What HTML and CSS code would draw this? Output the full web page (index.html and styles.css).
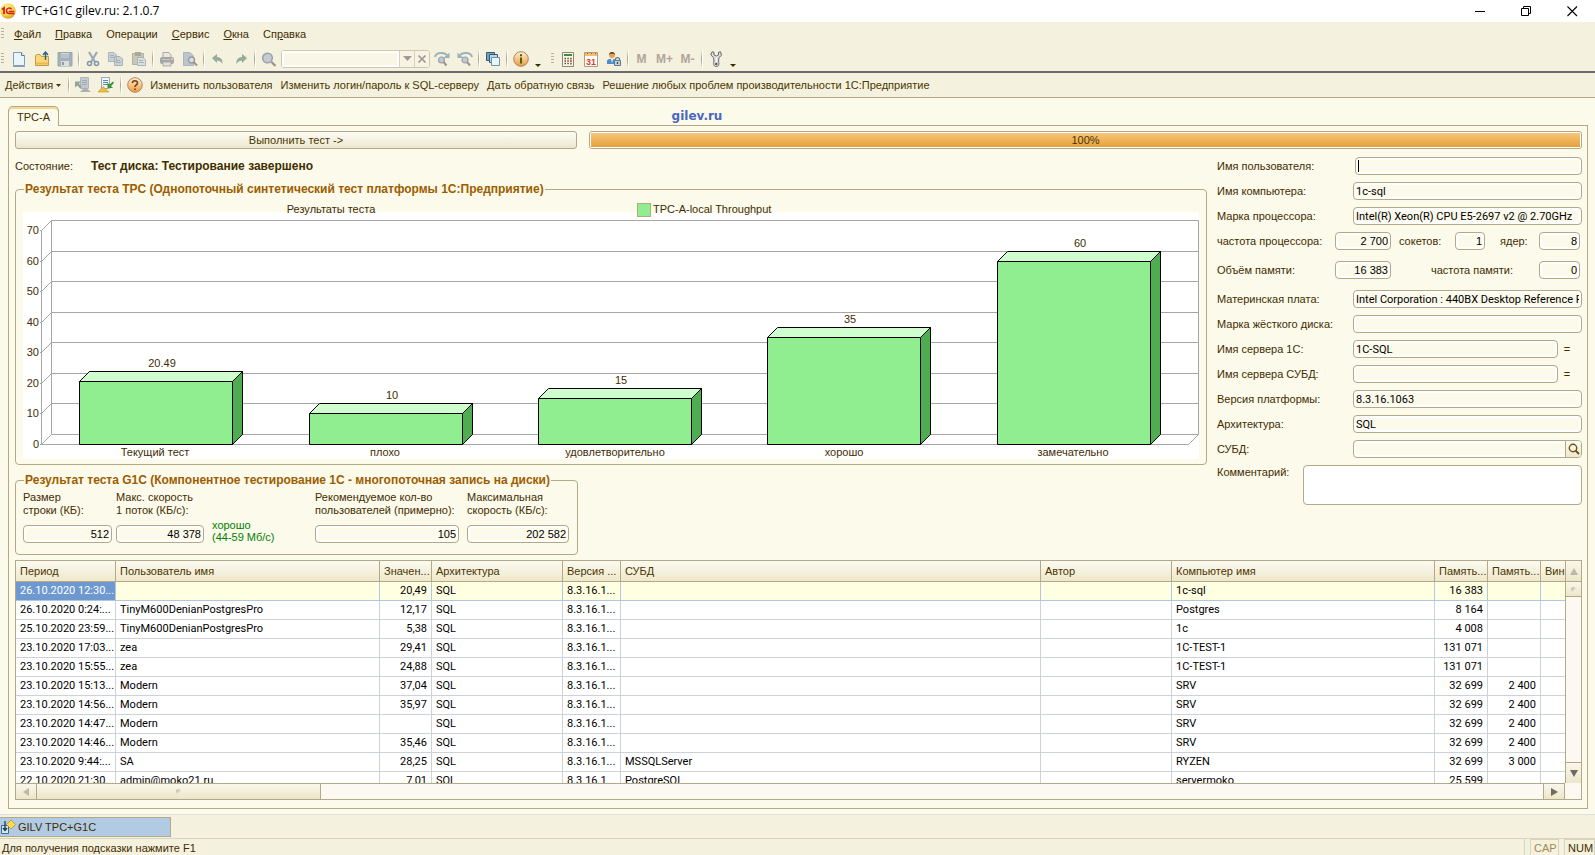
FILE: index.html
```
<!DOCTYPE html>
<html lang="ru">
<head>
<meta charset="utf-8">
<title>TPC+G1C gilev.ru: 2.1.0.7</title>
<link rel="stylesheet" href="styles.css">
</head>
<body>
<header class="titlebar">
  <svg class="logo" width="16" height="16" viewBox="0 0 16 16"><defs><radialGradient id="gold" cx=".4" cy=".3" r=".8"><stop offset="0" stop-color="#fff3a0"/><stop offset=".6" stop-color="#f6cf45"/><stop offset="1" stop-color="#c98d1c"/></radialGradient></defs><circle cx="8" cy="8" r="7.7" fill="url(#gold)"/><path d="M2 6.500L4 5V11" fill="none" stroke="#d9201a" stroke-width="1.800"/><path d="M11.500 6.300C10.500 4.300 6.500 4.700 6.500 7.700C6.500 10.300 8.500 10.500 9.500 10.500H14.500M8.800 8.500H14" fill="none" stroke="#d9201a" stroke-width="1.500"/></svg>
  <h1 class="title">TPC+G1C gilev.ru: 2.1.0.7</h1>
  <div class="winbtns">
    <button aria-label="Свернуть"><svg width="11" height="11"><path d="M0 5.500H10" stroke="#000"/></svg></button>
    <button aria-label="Развернуть"><svg width="11" height="11"><path d="M.5 2.500H7.500V9.500H.5ZM2.500 2.500V.5H9.500V7.500H7.500" fill="none" stroke="#000"/></svg></button>
    <button aria-label="Закрыть"><svg width="11" height="11"><path d="M.5 .5L10 10M10 .5L.5 10" stroke="#000" stroke-width="1.100"/></svg></button>
  </div>
</header>

<nav class="menubar">
  <span class="grip"></span>
  <button><u>Ф</u>айл</button><button><u>П</u>равка</button><button>Операции</button><button><u>С</u>ервис</button><button><u>О</u>кна</button><button>Сп<u>р</u>авка</button>
</nav>

<div class="toolbar">
  <span class="grip"></span>
  <button class="tb" aria-label="Создать"><svg width="16" height="16"><path d="M2.500 1.500H10.500L13.500 4.500V14.500H2.500Z" fill="#eaf4fb" stroke="#7d9dbd"/><path d="M10.500 1.500V4.500H13.500" fill="#fff" stroke="#4f7ba8"/><path d="M2 15.500H14" stroke="#8a9fb4"/></svg></button>
  <button class="tb" aria-label="Открыть"><svg width="16" height="16"><path d="M1.500 14.500V4.500L3 3.500H6L7.500 5.500H14.500V14.500Z" fill="#fbd877" stroke="#c89c45"/><path d="M2 12.500H14" stroke="#edb94e" stroke-width="2"/><path d="M11.500 9V1.500M9 4L11.500 1L14 4" fill="none" stroke="#2b6183" stroke-width="1.400"/></svg></button>
  <button class="tb" aria-label="Сохранить"><svg width="16" height="16"><path d="M1 1.500H15V15H1Z" fill="#a3b1bb" stroke="#98a6b0"/><path d="M4 2H12V7H4Z" fill="#cfd6d8"/><path d="M4 4H12M4 6H12" stroke="#a3b1bb"/><path d="M4 10H12V15H4Z" fill="#dbe0df"/><path d="M6 11V14" stroke="#8c9aa5" stroke-width="2"/></svg></button>
  <span class="sep"></span>
  <button class="tb" aria-label="Вырезать"><svg width="16" height="16"><path d="M4 1L10 11M12 1L6 11" stroke="#9aaab6" stroke-width="2.200"/><circle cx="4.500" cy="12.500" r="2" fill="none" stroke="#8297a9" stroke-width="1.600"/><circle cx="11.500" cy="12.500" r="2" fill="none" stroke="#8297a9" stroke-width="1.600"/></svg></button>
  <button class="tb" aria-label="Копировать"><svg width="16" height="16"><path d="M.5 1.500H6L8.500 4V10.500H.5ZM6.500 5.500H12L14.500 8V14.500H6.500Z" fill="#cbd2d3" stroke="#a8b3bd"/><path d="M2 4.500H6M2 6.500H6M8 9.500H12M8 11.500H13" stroke="#a2afba"/></svg></button>
  <button class="tb" aria-label="Вставить"><svg width="16" height="16"><path d="M1.500 2.500H12.500V13.500H1.500Z" fill="#c9c8b5" stroke="#b3b1a0"/><path d="M4 1H10V5H4Z" fill="#aaa898"/><path d="M6.500 6.500H12L14.500 9V14.500H6.500Z" fill="#dbe0e0" stroke="#a8b3bd"/><path d="M8 9.500H12M8 11.500H13" stroke="#a2afba"/></svg></button>
  <span class="sep"></span>
  <button class="tb" aria-label="Печать"><svg width="16" height="16"><path d="M4 7V1.500H10L12 4V7" fill="#e6e7df" stroke="#aaa9a8"/><rect x="1" y="6" width="14" height="7" rx="2" fill="#a5a4a9"/><path d="M3 8.500H11" stroke="#cac8c7"/><path d="M4 11H12V15H4Z" fill="#e2e0d8" stroke="#aaa"/><path d="M12 8H14" stroke="#e3c4a5" stroke-width="2"/></svg></button>
  <button class="tb" aria-label="Предварительный просмотр"><svg width="16" height="16"><path d="M1.500 1.500H8L11.500 5V14.500H1.500Z" fill="#bdc5cc" stroke="#aab5bd"/><circle cx="9.500" cy="9" r="3" fill="#d7dee1" stroke="#9b9ca2" stroke-width="1.400"/><path d="M11.500 11L15 14.500" stroke="#a48e8a" stroke-width="2"/></svg></button>
  <span class="sep"></span>
  <button class="tb" aria-label="Отменить"><svg width="16" height="16"><path d="M2 7L7 3V6C11 6 13 9 12.500 13C11 10.500 10 10 7 9.500V12Z" fill="#95ab9c"/></svg></button>
  <button class="tb" aria-label="Вернуть"><svg width="16" height="16"><path d="M14 7L9 3V6C5 6 3 9 3.500 13C5 10.500 6 10 9 9.500V12Z" fill="#95ab9c"/></svg></button>
  <span class="sep"></span>
  <button class="tb" aria-label="Найти"><svg width="16" height="16"><circle cx="6.500" cy="7" r="4.800" fill="#c5ccd1" stroke="#9da1a9" stroke-width="1.600"/><path d="M10.500 11L14.500 15" stroke="#a4918e" stroke-width="2.400"/></svg></button>
  <div class="combo"><input type="text" aria-label="Строка поиска"><button aria-label="Список"><svg width="9" height="5"><path d="M0 0H9L4.500 5Z" fill="#a09c92"/></svg></button><button aria-label="Очистить"><svg width="8" height="8"><path d="M.5 .5L7.500 7.500M7.500 .5L.5 7.500" stroke="#a09c92" stroke-width="1.600"/></svg></button></div>
  <button class="tb" aria-label="Найти следующий"><svg width="16" height="16"><path d="M1 6C2 1 10 1 13 4" fill="none" stroke="#9db1bd" stroke-width="2"/><path d="M15.500 1.500V7H9.500Z" fill="#9db1bd"/><circle cx="7.500" cy="9" r="3" fill="#bfc9d0" stroke="#9da1a9" stroke-width="1.200"/><path d="M9.500 11L12.500 14.500" stroke="#a4918e" stroke-width="2"/></svg></button>
  <button class="tb" aria-label="Найти предыдущий"><svg width="16" height="16"><path d="M15 6C14 1 6 1 3 4" fill="none" stroke="#9db1bd" stroke-width="2"/><path d="M.5 1.500V7H6.500Z" fill="#9db1bd"/><circle cx="8" cy="9" r="3" fill="#bfc9d0" stroke="#9da1a9" stroke-width="1.200"/><path d="M10 11L13 14.500" stroke="#a4918e" stroke-width="2"/></svg></button>
  <span class="sep"></span>
  <button class="tb" aria-label="Окна"><svg width="16" height="16"><path d="M1.500 1.500H9.500V9.500H1.500Z" fill="#7fa0b4" stroke="#2e5d7c"/><path d="M4.500 3.500H12.500V11.500H4.500Z" fill="#bdd5e5" stroke="#2e5d7c"/><path d="M6.500 6.500H14.500V14.500H6.500Z" fill="#eaf4fb" stroke="#6f93ad"/></svg></button>
  <span class="sep"></span>
  <button class="tb" aria-label="Справка"><svg width="16" height="16"><defs><linearGradient id="org" x2="0" y2="1"><stop stop-color="#fff0cf"/><stop offset="1" stop-color="#ee9b3b"/></linearGradient></defs><circle cx="8" cy="8" r="7.300" fill="url(#org)" stroke="#ac8567"/><path d="M8 3.200V5.200M8 6.500V12.500" stroke="#44621d" stroke-width="2"/></svg></button>
  <button class="dd" aria-label="Ещё"><svg width="6" height="3"><path d="M0 0H6L3 3Z" fill="#3c2b00"/></svg></button>
  <span class="grip grip-mid"></span>
  <button class="tb" aria-label="Калькулятор"><svg width="16" height="16"><path d="M2.500 1.500H13.500V15.500H2.500Z" fill="#fcf7e6" stroke="#8a8678"/><path d="M4 4H12" stroke="#3f8f38" stroke-width="2"/><path d="M4.500 7.500H12M4.500 10H12M4.500 12.500H12" stroke="#54503f" stroke-width="1.500" stroke-dasharray="1.500 1.300"/><path d="M10.800 7V13.500" stroke="#cf5a3c" stroke-width="1.500" stroke-dasharray="1.500 1"/></svg></button>
  <button class="tb" aria-label="Календарь"><svg width="16" height="16"><path d="M1.500 1.500H14.500V15.500H1.500Z" fill="#fff" stroke="#b09b7f"/><path d="M2 2H14V5H2Z" fill="#f2bd70"/><path d="M4 2.500H5M8 2.500H9M12 2.500H13" stroke="#85633a"/><text x="8" y="14" class="ico-day" text-anchor="middle">31</text></svg></button>
  <button class="tb" aria-label="Пользователь"><svg width="16" height="16"><circle cx="6" cy="4" r="3" fill="#e6a251"/><path d="M3 4C3 0 9 0 9 4L8 2.800H4Z" fill="#5d3b18"/><path d="M1 13V10C1 7 10 7 10 10V13Z" fill="#4d8ec0"/><path d="M5 8H7L6 12Z" fill="#fff"/><path d="M9.500 10V8.500C9.500 6 13.500 6 13.500 8.500V10" fill="none" stroke="#647889" stroke-width="1.300"/><path d="M8.500 9.500H14.500V14.500H8.500Z" fill="#c6d4df" stroke="#647889"/><path d="M11.500 11V13" stroke="#40566a" stroke-width="1.500"/></svg></button>
  <span class="sep"></span>
  <button class="tb mem">M</button><button class="tb mem">M+</button><button class="tb mem">M-</button>
  <span class="sep"></span>
  <button class="tb" aria-label="Настройки"><svg width="16" height="16"><path d="M4 .8L2.800 4L5.500 6.500L6 10C5 14 6 15.500 8.300 15.500S11.500 14 10.500 10L11 6.500L13.500 4.300L12.500 .8L10.500 1.200V4L8.300 5L6 4V1.200Z" fill="#dededb" stroke="#66696c"/><circle cx="8.300" cy="13" r="1.200" fill="#555"/><path d="M8.300 6.500V11" stroke="#fff"/></svg></button>
  <button class="dd" aria-label="Ещё"><svg width="6" height="3"><path d="M0 0H6L3 3Z" fill="#3c2b00"/></svg></button>
</div>

<div class="actionbar">
  <button class="act">Действия <svg width="5" height="3"><path d="M0 0H5L2.500 3Z" fill="#4a3600"/></svg></button>
  <span class="sep"></span>
  <button class="tb" aria-label="Сохранить параметры"><svg width="16" height="16"><path d="M5.500 .5H13.500V11.500H5.500Z" fill="#c3cad0" stroke="#aeb7bd"/><path d="M7 3.500H12M7 5.500H12M7 7.500H12" stroke="#9eabb6"/><path d="M0 4.500H6L4 6.500L7 10L5 11.500L2.500 8.500L0 10.500Z" fill="#91a59a"/><path d="M5 15L10 10L16 15Z" fill="#b0aeb0"/></svg></button>
  <button class="tb" aria-label="Восстановить параметры"><svg width="16" height="16"><path d="M3.500 .5H11.500V11.500H3.500Z" fill="#f1f6fa" stroke="#94aabd"/><path d="M5 3.500H10M5 5.500H10M5 7.500H10" stroke="#6288a9"/><path d="M15 4.500L11.500 7.500L9.500 5.500V11H15L13 9L16 6Z" fill="#3c9336"/><path d="M0 15L5 9.500L11 15Z" fill="#efbc3e" stroke="#b48b26" stroke-width=".5"/></svg></button>
  <span class="sep"></span>
  <button class="tb" aria-label="Справка по форме"><svg width="16" height="16"><circle cx="8" cy="8" r="7.300" fill="url(#org)" stroke="#b08466"/><path d="M5.300 6C5.500 3 10.700 3 10.500 6C10.500 7.800 8 7.800 8 10M8 11.500V13" fill="none" stroke="#704021" stroke-width="1.600"/></svg></button>
  <button class="act">Изменить пользователя</button><button class="act">Изменить логин/пароль к SQL-серверу</button><button class="act">Дать обратную связь</button><button class="act">Решение любых проблем производительности 1С:Предприятие</button>
</div>

<main class="workspace">
  <div class="tabs"><button class="tab">TPC-A</button><a class="site" href="#">gilev.ru</a></div>
  <section class="panel">
    <div class="runrow">
      <button class="run">Выполнить тест -&gt;</button>
      <div class="progress" role="progressbar" aria-valuenow="100"><span>100%</span></div>
    </div>
    <div class="upper">
      <div class="left">
        <p class="state"><span>Состояние:</span><strong>Тест диска: Тестирование завершено</strong></p>
        <fieldset class="group">
          <legend>Результат теста TPC (Однопоточный синтетический тест платформы 1С:Предприятие)</legend>
          <svg class="chart" viewBox="0 0 1176 259">
            <rect y="12" width="1176" height="247" fill="#fff"/>
            <g class="grid">
              <path d="M28.500 20.500H1175.500M28.500 51.500H1175.500M28.500 81.500H1175.500M28.500 112.500H1175.500M28.500 142.500H1175.500M28.500 173.500H1175.500M28.500 203.500H1175.500M28.500 234.500H1175.500M28.500 20.500V234.500M1175.500 20.500V234.500M18.500 30.500V244.500H1165.500L1175.500 234.500"/>
              <path d="M17 30.500H18.500L28.500 20.500M17 61.500H18.500L28.500 51.500M17 91.500H18.500L28.500 81.500M17 122.500H18.500L28.500 112.500M17 152.500H18.500L28.500 142.500M17 183.500H18.500L28.500 173.500M17 213.500H18.500L28.500 203.500M17 244.500H18.500L28.500 234.500"/>
            </g>
            <g class="bars">
              <path class="top" d="M56.500 181.500L66.500 171.500H219.500L209.500 181.500Z"/><path class="side" d="M209.500 181.500L219.500 171.500V234.500L209.500 244.500Z"/><path class="front" d="M56.500 181.500H209.500V244.500H56.500Z"/>
              <path class="top" d="M286.500 213.500L296.500 203.500H449.500L439.500 213.500Z"/><path class="side" d="M439.500 213.500L449.500 203.500V234.500L439.500 244.500Z"/><path class="front" d="M286.500 213.500H439.500V244.500H286.500Z"/>
              <path class="top" d="M515.500 198.500L525.500 188.500H678.500L668.500 198.500Z"/><path class="side" d="M668.500 198.500L678.500 188.500V234.500L668.500 244.500Z"/><path class="front" d="M515.500 198.500H668.500V244.500H515.500Z"/>
              <path class="top" d="M744.500 137.500L754.500 127.500H907.500L897.500 137.500Z"/><path class="side" d="M897.500 137.500L907.500 127.500V234.500L897.500 244.500Z"/><path class="front" d="M744.500 137.500H897.500V244.500H744.500Z"/>
              <path class="top" d="M974.500 61.500L984.500 51.500H1137.500L1127.500 61.500Z"/><path class="side" d="M1127.500 61.500L1137.500 51.500V234.500L1127.500 244.500Z"/><path class="front" d="M974.500 61.500H1127.500V244.500H974.500Z"/>
            </g>
            <rect x="614.500" y="3.500" width="13" height="13" fill="#90ee90" stroke="#b3a986"/>
            <g class="lbl">
              <text x="308" y="13">Результаты теста</text><text class="key-text" x="630" y="13">TPC-A-local Throughput</text>
              <text x="139" y="167">20.49</text><text x="369" y="199">10</text><text x="598" y="184">15</text><text x="827" y="123">35</text><text x="1057" y="47">60</text>
              <text x="132" y="256">Текущий тест</text><text x="362" y="256">плохо</text><text x="592" y="256">удовлетворительно</text><text x="821" y="256">хорошо</text><text x="1050" y="256">замечательно</text>
            </g>
            <g class="lbl axis"><text x="16" y="34">70</text><text x="16" y="65">60</text><text x="16" y="95">50</text><text x="16" y="126">40</text><text x="16" y="156">30</text><text x="16" y="187">20</text><text x="16" y="217">10</text><text x="16" y="248">0</text></g>
          </svg>
        </fieldset>
        <fieldset class="group g1c">
          <legend>Результат теста G1C (Компонентное тестирование 1С - многопоточная запись на диски)</legend>
          <div class="metrics">
            <label class="m-size">Размер<br>строки (КБ):<input value="512" readonly></label>
            <label class="m-one">Макс. скорость<br>1 поток (КБ/с):<input value="48 378" readonly></label>
            <output class="grade">хорошо<br>(44-59 Мб/с)</output>
            <label class="m-users">Рекомендуемое кол-во<br>пользователей (примерно):<input value="105" readonly></label>
            <label class="m-max">Максимальная<br>скорость (КБ/с):<input value="202 582" readonly></label>
          </div>
        </fieldset>
      </div>
      <div class="props">
        <div class="prop"><label for="f1">Имя пользователя:</label><span class="field caret"><input id="f1"></span></div>
        <div class="prop"><label for="f2">Имя компьютера:</label><input id="f2" class="field" value="1c-sql"></div>
        <div class="prop"><label for="f3">Марка процессора:</label><input id="f3" class="field" value="Intel(R) Xeon(R) CPU E5-2697 v2 @ 2.70GHz"></div>
        <div class="prop cpu"><label for="f4">частота процессора:</label><input id="f4" class="num" value="2 700"><label for="f5">сокетов:</label><input id="f5" class="num" value="1"><label for="f6">ядер:</label><input id="f6" class="num" value="8"></div>
        <div class="prop ram"><label for="f7">Объём памяти:</label><input id="f7" class="num" value="16 383"><label for="f8">частота памяти:</label><input id="f8" class="num" value="0"></div>
        <div class="prop"><label for="f9">Материнская плата:</label><input id="f9" class="field" value="Intel Corporation : 440BX Desktop Reference F"></div>
        <div class="prop"><label for="f10">Марка жёсткого диска:</label><input id="f10" class="field"></div>
        <div class="prop eq"><label for="f11">Имя сервера 1С:</label><input id="f11" class="field" value="1C-SQL"><button>=</button></div>
        <div class="prop eq"><label for="f12">Имя сервера СУБД:</label><input id="f12" class="field"><button>=</button></div>
        <div class="prop"><label for="f13">Версия платформы:</label><input id="f13" class="field" value="8.3.16.1063"></div>
        <div class="prop"><label for="f14">Архитектура:</label><input id="f14" class="field" value="SQL"></div>
        <div class="prop"><label for="f15">СУБД:</label><span class="field lookup"><input id="f15"><button aria-label="Открыть"><svg width="12" height="12"><circle cx="5" cy="5" r="3.700" fill="none" stroke="#6a5410" stroke-width="1.400"/><path d="M7.500 7.500L11 11" stroke="#6a5410" stroke-width="2"/></svg></button></span></div>
        <div class="prop note"><label for="f16">Комментарий:</label><textarea id="f16"></textarea></div>
      </div>
    </div>

    <div class="gridbox">
      <div class="tablewrap">
        <table>
          <colgroup><col class="c1"><col class="c2"><col class="c3"><col class="c4"><col class="c5"><col><col class="c7"><col class="c8"><col class="c9"><col class="c9"><col class="c11"></colgroup>
          <thead><tr><th>Период</th><th>Пользователь имя</th><th>Значен...</th><th>Архитектура</th><th>Версия ...</th><th>СУБД</th><th>Автор</th><th>Компьютер имя</th><th>Память...</th><th>Память...</th><th>Вин</th></tr></thead>
          <tbody>
            <tr class="current"><td>26.10.2020 12:30...</td><td></td><td>20,49</td><td>SQL</td><td>8.3.16.1...</td><td></td><td></td><td>1c-sql</td><td>16 383</td><td></td><td></td></tr>
            <tr><td>26.10.2020 0:24:...</td><td>TinyM600DenianPostgresPro</td><td>12,17</td><td>SQL</td><td>8.3.16.1...</td><td></td><td></td><td>Postgres</td><td>8 164</td><td></td><td></td></tr>
            <tr><td>25.10.2020 23:59...</td><td>TinyM600DenianPostgresPro</td><td>5,38</td><td>SQL</td><td>8.3.16.1...</td><td></td><td></td><td>1c</td><td>4 008</td><td></td><td></td></tr>
            <tr><td>23.10.2020 17:03...</td><td>zea</td><td>29,41</td><td>SQL</td><td>8.3.16.1...</td><td></td><td></td><td>1C-TEST-1</td><td>131 071</td><td></td><td></td></tr>
            <tr><td>23.10.2020 15:55...</td><td>zea</td><td>24,88</td><td>SQL</td><td>8.3.16.1...</td><td></td><td></td><td>1C-TEST-1</td><td>131 071</td><td></td><td></td></tr>
            <tr><td>23.10.2020 15:13...</td><td>Modern</td><td>37,04</td><td>SQL</td><td>8.3.16.1...</td><td></td><td></td><td>SRV</td><td>32 699</td><td>2 400</td><td></td></tr>
            <tr><td>23.10.2020 14:56...</td><td>Modern</td><td>35,97</td><td>SQL</td><td>8.3.16.1...</td><td></td><td></td><td>SRV</td><td>32 699</td><td>2 400</td><td></td></tr>
            <tr><td>23.10.2020 14:47...</td><td>Modern</td><td></td><td>SQL</td><td>8.3.16.1...</td><td></td><td></td><td>SRV</td><td>32 699</td><td>2 400</td><td></td></tr>
            <tr><td>23.10.2020 14:46...</td><td>Modern</td><td>35,46</td><td>SQL</td><td>8.3.16.1...</td><td></td><td></td><td>SRV</td><td>32 699</td><td>2 400</td><td></td></tr>
            <tr><td>23.10.2020 9:44:...</td><td>SA</td><td>28,25</td><td>SQL</td><td>8.3.16.1...</td><td>MSSQLServer</td><td></td><td>RYZEN</td><td>32 699</td><td>3 000</td><td></td></tr>
            <tr><td>22.10.2020 21:30...</td><td>admin@moko21.ru</td><td>7,01</td><td>SQL</td><td>8.3.16.1...</td><td>PostgreSQL</td><td></td><td>servermoko</td><td>25 599</td><td></td><td></td></tr>
          </tbody>
        </table>
      </div>
      <div class="vscroll">
        <button aria-label="Вверх"><svg width="8" height="7"><path d="M0 7H8L4 0Z" fill="#bdb8a5"/></svg></button>
        <span class="thumb"></span>
        <button class="down" aria-label="Вниз"><svg width="8" height="7"><path d="M0 0H8L4 7Z" fill="#6d6a62"/></svg></button>
      </div>
      <div class="hscroll">
        <button aria-label="Влево"><svg width="6" height="8"><path d="M6 0V8L0 4Z" fill="#bdb8a5"/></svg></button>
        <span class="thumb"></span>
        <button class="rightbtn" aria-label="Вправо"><svg width="7" height="8"><path d="M0 0V8L7 4Z" fill="#6d6a62"/></svg></button>
      </div>
    </div>
  </section>
</main>

<div class="windowbar">
  <button><svg width="16" height="16"><path d="M1.500 6.500H8.500V14.500H1.500Z" fill="#d7e7f3" stroke="#3f6a8a"/><path d="M5 2V11M3 9L5 11.500L7 9" fill="none" stroke="#173a56" stroke-width="1.300"/><path d="M11 1L15.500 5.500L11 10L6.500 5.500Z" fill="#ffd94f" stroke="#b58b1f" stroke-width=".7"/></svg>GILV TPC+G1C</button>
</div>
<footer class="status"><span class="hint">Для получения подсказки нажмите F1</span><span class="key off">CAP</span><span class="key num-lock">NUM</span></footer>
</body>
</html>
```
FILE: styles.css
```
* { box-sizing: border-box; }
body {
  margin: 0;
  height: 100vh;
  overflow: hidden;
  display: flex;
  flex-direction: column;
  background: #fcfaeb;
  color: #3f2d00;
  font: 11px/14px "Liberation Sans", Arial, sans-serif;
}
button, input, textarea { font: inherit; color: inherit; margin: 0; }
button { background: none; border: 0; padding: 0; white-space: nowrap; }
input { outline: 0; min-width: 0; }
svg { display: block; flex: none; }

.titlebar { display: flex; align-items: center; height: 22px; background: #fff; color: #000; flex: none; }
.title { margin: 0 auto 0 5px; font: 12px/16px "Open Sans", sans-serif; }
.winbtns { display: flex; }
.winbtns button { width: 46px; height: 18px; display: grid; place-items: center; }

.menubar { display: flex; align-items: center; height: 24px; background: #f4f1de; flex: none; }
.menubar button { padding: 0 7px; }
.grip { width: 3px; height: 12px; margin: 0 3px 0 1px; background: repeating-linear-gradient(#b5b199 0 1px, transparent 1px 3px); }
.grip-mid { margin: 0 2px 0 7px; }

.toolbar { display: flex; align-items: center; height: 27px; background: #f4f1de; border-bottom: 2px solid #6d6a6a; flex: none; }
.tb { width: 23px; height: 20px; display: grid; place-items: center; flex: none; }
.sep { width: 1px; height: 18px; margin: 0 2px; background: linear-gradient(#eeead2, #a7a080, #eeead2); flex: none; }
.toolbar .sep, .actionbar .sep { box-shadow: 1px 0 #fff; }
.combo { display: flex; width: 149px; height: 18px; margin-left: 1px; border: 1px solid #cdc8ae; border-radius: 3px; background: #fff; overflow: hidden; }
.combo input { flex: 1; border: 2px solid #fff; background: #f9f6e5; }
.combo button { width: 15px; display: grid; place-items: center; background: #f7f4e4; border-left: 1px solid #d5d0b8; }
.dd { width: 12px; height: 16px; display: grid; place-items: end center; }
.mem { font-size: 12px; font-weight: bold; color: #b1a59a; }
.ico-day { font: bold 9px "Liberation Sans", sans-serif; fill: #df3d1c; }

.actionbar { display: flex; align-items: center; height: 25px; padding-left: 1px; background: #f4f1de; border-bottom: 1px solid #b3a986; color: #4a3600; flex: none; }
.act { padding: 0 4px; display: flex; align-items: center; gap: 3px; }
.actionbar .sep { margin: 0 2px 0 3px; }

.workspace { flex: 1; min-height: 0; display: flex; flex-direction: column; padding: 8px 7px 5px 8px; }
.tabs { display: grid; grid-template-columns: 42% 1fr; height: 20px; margin-bottom: -1px; flex: none; }
.tab { justify-self: start; height: 20px; width: 51px; border: 1px solid #b3a986; border-bottom: 0; border-radius: 5px 5px 0 0; background: #fcfaeb; box-shadow: inset 0 2px #f8d795; position: relative; }
.site { color: #4a67bf; font: bold 12px/20px "DejaVu Sans", sans-serif; text-decoration: none; }
.panel { flex: 1; min-height: 0; display: flex; flex-direction: column; border: 1px solid #b3a986; padding: 5px 5px 8px 6px; }

.runrow { display: grid; grid-template-columns: 562fr 993fr; gap: 12px; flex: none; }
.run { height: 18px; border: 1px solid #b3a986; border-radius: 3px; background: linear-gradient(#fdfcf5, #ece7cf); color: #4a3600; }
.progress { height: 18px; border: 1px solid #b3a986; border-radius: 3px; padding: 1px; background: #fff; text-align: center; color: #4a3600; }
.progress span { display: block; line-height: 14px; background: linear-gradient(#f8c67b, #e5a03a); }

.upper { display: flex; gap: 10px; flex: none; }
.left { flex: 1; min-width: 0; }
.state { display: flex; gap: 18px; margin: 10px 0 9px; }
.state strong { font-size: 12px; }
.group { margin: 0; padding: 0 7px 5px; border: 1px solid #b3a986; border-radius: 4px; min-width: 0; }
.group legend { padding: 0 1px; margin-left: 1px; font-size: 12px; font-weight: bold; color: #9c5d00; line-height: 14px; }
.chart { width: 100%; height: auto; margin-top: 4px; }
.grid path { fill: none; stroke: #a6a6a6; }
.bars path { stroke: #000; stroke-linejoin: round; }
.top { fill: #cfffcf; }
.side { fill: #50ac50; }
.front { fill: #90ee90; }
.lbl { font-size: 11px; fill: #3f2d00; text-anchor: middle; }
.key-text { text-anchor: start; }
.axis { text-anchor: end; }

.g1c { width: 563px; margin-top: 8px; padding-bottom: 11px; }
.metrics { display: flex; align-items: flex-end; padding-top: 4px; white-space: nowrap; }
.metrics label { line-height: 13px; }
.metrics input { display: block; width: 100%; margin-top: 8px; text-align: right; }
.m-size { width: 89px; margin-right: 4px; }
.m-one { width: 88px; margin-right: 8px; }
.m-users { width: 144px; margin-right: 8px; }
.m-max { width: 102px; }
.grade { width: 103px; color: #008000; line-height: 12px; }
.metrics input, .field, .num {
  height: 18px;
  padding: 0 2px;
  border: 1px solid #b3a986;
  border-radius: 4px;
  background: #fcfaeb;
  box-shadow: inset 0 0 0 2px #fff;
  color: #000;
}
.field, td { font-family: Roboto, "Liberation Sans", sans-serif; }

.props { width: 365px; flex: none; display: flex; flex-direction: column; gap: 7px; padding-top: 8px; white-space: nowrap; }
.prop { display: grid; grid-template-columns: 136px 1fr; align-items: center; min-height: 18px; }
.caret, .lookup { display: flex; min-width: 0; }
.caret { margin-left: 2px; align-items: center; }
.caret::before { content: ""; width: 1px; height: 12px; background: #000; }
.caret input, .lookup input { flex: 1; border: 0; background: none; padding: 0; }
.props .lookup { padding-right: 0; }
.lookup button { width: 16px; display: grid; place-items: center; border-left: 1px solid #b3a986; border-radius: 0 3px 3px 0; background: linear-gradient(#fdfcf5, #ece7cf); }
.num { width: 100%; text-align: right; }
.cpu label + input + label { padding-left: 8px; }
.cpu input:nth-child(4) + label { padding-left: 15px; }
.cpu { grid-template-columns: 118px 56px 64px 30px 54px 41px; }
.ram { grid-template-columns: 118px 56px 148px 41px; margin: 4px 0; }
.ram input + label { padding-left: 40px; }
.eq { grid-template-columns: 136px 1fr 24px; }
.eq button { padding-right: 6px; }
.note { grid-template-columns: 86px 1fr; align-items: start; }
.note textarea { width: 100%; height: 40px; border: 1px solid #b3a986; border-radius: 4px; background: #fff; resize: none; outline: 0; }

.gridbox { flex: 1; min-height: 0; margin-top: 5px; display: grid; grid-template: minmax(0, 1fr) 16px / minmax(0, 1fr) 16px; border: 1px solid #b3a986; background: #fbf9f2; }
.tablewrap { overflow: hidden; background: #fff; }
table { width: 100%; table-layout: fixed; border-collapse: separate; border-spacing: 0; color: #000; }
th, td { padding: 0 4px; border-right: 1px solid #ccd2d8; border-bottom: 1px solid #ccd2d8; overflow: hidden; white-space: nowrap; text-align: left; font-weight: normal; }
th { height: 21px; color: #4a3600; background: linear-gradient(#fbfaf1, #efe8cb); border-color: #b3a986; }
td { height: 19px; }
td:nth-child(3), td:nth-child(9), td:nth-child(10) { text-align: right; }
th:last-child, td:last-child { border-right: 0; padding-right: 0; }
.current td { background: #ffffe1; border-color: #b0c7e2; }
.current td:first-child { background: #6d98d0; color: #fff; }
.c1 { width: 100px; } .c2 { width: 264px; } .c3 { width: 52px; } .c4 { width: 131px; } .c5 { width: 58px; }
.c7 { width: 131px; } .c8 { width: 263px; } .c9 { width: 53px; } .c11 { width: 24px; }
.vscroll { display: flex; flex-direction: column; border-left: 1px solid #b3a986; }
.vscroll button, .hscroll button, .thumb { display: grid; place-items: center; background: linear-gradient(#f9f7ea, #ece6c9); }
.vscroll button { height: 21px; border-bottom: 1px solid #b3a986; }
.vscroll .thumb { height: 15px; border-bottom: 1px solid #b3a986; }
.vscroll .down { margin-top: auto; border-top: 1px solid #b3a986; border-bottom: 0; }
.hscroll { display: flex; border-top: 1px solid #b3a986; border-right: 1px solid #b3a986; }
.hscroll button { width: 21px; border-right: 1px solid #b3a986; }
.hscroll .thumb { width: 284px; border-right: 1px solid #b3a986; }
.hscroll .rightbtn { margin-left: auto; border-left: 1px solid #b3a986; border-right: 0; }
.thumb::after { content: ""; width: 5px; height: 5px; border-radius: 50%; background: linear-gradient(135deg, #b3ad90, #fff); }

.windowbar { height: 25px; padding-top: 2px; background: #f4f1de; border-top: 1px solid #dfdfdf; border-bottom: 1px solid #d8d4bd; flex: none; }
.windowbar button { display: flex; align-items: center; gap: 2px; width: 171px; height: 20px; background: #b2cbe4; border: 1px solid #b3a986; border-left: 0; text-align: left; }
.status { display: flex; gap: 5px; height: 16px; line-height: 19px; background: #f4f1de; flex: none; }
.hint { flex: 1; padding-left: 2px; border-right: 1px solid #d8d4bd; }
.key { width: 29px; padding-left: 3px; border: 1px solid #d8d4bd; border-bottom: 0; line-height: 17px; }
.num-lock { width: 31px; }
.off { color: #a08b50; }
```
